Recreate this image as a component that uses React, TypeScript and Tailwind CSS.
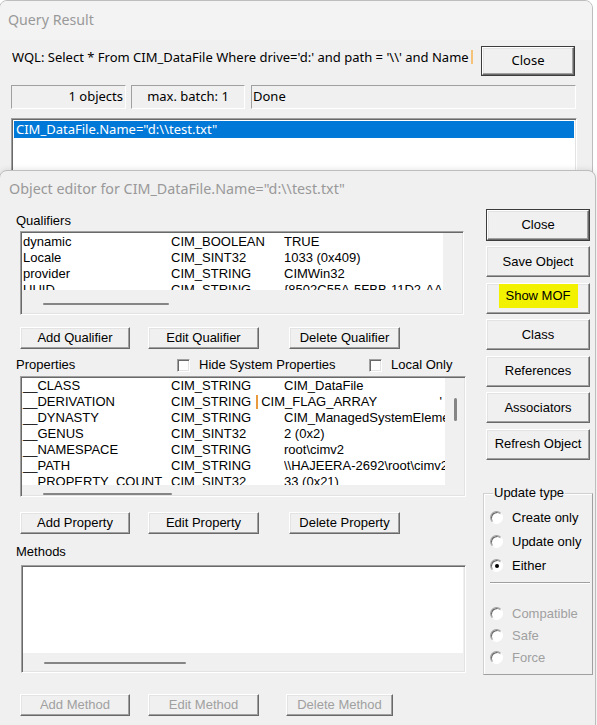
import React from 'react';

type BtnProps = {
  children: React.ReactNode;
  className?: string;
  disabled?: boolean;
};

// classic raised 3D push button
function Btn({ children, className = '', disabled = false }: BtnProps) {
  return (
    <div
      className={`flex items-center justify-center bg-[#f0f0f0] border border-t-white border-l-white border-r-[#696969] border-b-[#696969] shadow-[inset_-1px_-1px_0_#a0a0a0,inset_1px_1px_0_#e3e3e3] ${
        disabled ? 'text-[#a0a0a0]' : 'text-black'
      } ${className}`}
    >
      {children}
    </div>
  );
}

function DefBtn({ children, className = '' }: { children: React.ReactNode; className?: string }) {
  return (
    <div className={`border border-[#3c3c3c] ${className}`}>
      <Btn className="w-full h-full">{children}</Btn>
    </div>
  );
}

function Check() {
  return (
    <div className="w-[13px] h-[13px] bg-white border border-t-[#a0a0a0] border-l-[#a0a0a0] border-r-white border-b-white shadow-[inset_1px_1px_0_#696969,inset_-1px_-1px_0_#e3e3e3]" />
  );
}

function Radio({ on = false, label, disabled = false }: { on?: boolean; label: string; disabled?: boolean }) {
  return (
    <div className="flex items-center h-full">
      <div className="w-[13px] h-[13px] rounded-full bg-white border border-t-[#a0a0a0] border-l-[#a0a0a0] border-r-white border-b-white shadow-[inset_1px_1px_0_#696969] flex items-center justify-center">
        {on && <div className="w-[4px] h-[4px] rounded-full bg-black" />}
      </div>
      <span className={`ml-[9px] ${disabled ? 'text-[#a0a0a0]' : 'text-black'}`}>{label}</span>
    </div>
  );
}

const sunken =
  'relative bg-[#f0f0f0] border border-t-[#a0a0a0] border-l-[#a0a0a0] border-r-white border-b-white shadow-[inset_1px_1px_0_#696969,inset_-1px_-1px_0_#e3e3e3]';

const qualifiers = [
  ['dynamic', 'CIM_BOOLEAN', 'TRUE'],
  ['Locale', 'CIM_SINT32', '1033 (0x409)'],
  ['provider', 'CIM_STRING', 'CIMWin32'],
  ['UUID', 'CIM_STRING', '{8502C55A-5FBB-11D2-AAC1-006008C78BC7}'],
];

const properties = [
  ['__CLASS', 'CIM_STRING', 'CIM_DataFile'],
  ['__DERIVATION', 'CIM_STRING', ''],
  ['__DYNASTY', 'CIM_STRING', 'CIM_ManagedSystemElement'],
  ['__GENUS', 'CIM_SINT32', '2 (0x2)'],
  ['__NAMESPACE', 'CIM_STRING', 'root\\cimv2'],
  ['__PATH', 'CIM_STRING', '\\\\HAJEERA-2692\\root\\cimv2:CIM_DataFile.Name="d:\\\\test.txt"'],
  ['__PROPERTY_COUNT', 'CIM_SINT32', '33 (0x21)'],
];

function Row({ r }: { r: string[] }) {
  const deriv = r[0] === '__DERIVATION';
  return (
    <div className="flex h-[16px] leading-[16px] whitespace-nowrap">
      <div className="w-[149px] pl-[1px] shrink-0">{r[0]}</div>
      <div className="w-[113px] shrink-0 overflow-visible flex items-center">
        {r[1]}
        {deriv && (
          <>
            <span className="inline-block shrink-0 w-[2px] h-[14px] bg-[#e89a3c] ml-[5px] mr-[3px]" />
            <span>CIM_FLAG_ARRAY</span>
          </>
        )}
      </div>
      <div className={`flex-1 overflow-hidden ${deriv ? 'text-right pr-[3px]' : ''}`}>{deriv ? "'" : r[2]}</div>
    </div>
  );
}

export default function App() {
  return (
    <div className="relative w-[597px] h-[725px] overflow-hidden bg-white font-['Liberation_Sans',Arial,sans-serif] text-[13px] text-black">
      {/* Query Result window (behind) */}
      <div className="absolute left-[-1px] top-0 w-[594px] h-[300px] bg-[#f0f0f0] border border-[#bdbdbd] rounded-t-[8px] overflow-hidden">
        <div className="h-[39px] bg-[#f3f3f3] flex items-center pl-[8px] pb-[1px] text-[14.2px] text-[#999999] font-['Noto_Sans',sans-serif]">
          Query Result
        </div>
        <div className="flex items-start pt-[6px] pl-[12px] pr-[17px] font-['Noto_Sans',sans-serif] text-[13px]">
          <div className="mt-[2px] h-[18px] leading-[18px] w-[457px] overflow-hidden whitespace-nowrap">
            WQL: Select * From CIM_DataFile Where drive='d:' and path = '\\' and Name
          </div>
          <span className="mt-[4px] ml-[2px] w-[2px] h-[14px] bg-[#f5c27a]" />
          <DefBtn className="ml-auto w-[94px] h-[30px]">Close</DefBtn>
        </div>
        <div className="flex mt-[9px] ml-[11px] h-[24px] font-['Noto_Sans',sans-serif] text-[13px]">
          <div className="w-[115px] flex items-center justify-end pr-[2px] border border-t-[#a0a0a0] border-l-[#a0a0a0] border-r-white border-b-white">
            1 objects
          </div>
          <div className="ml-[5px] w-[114px] flex items-center justify-center border border-t-[#a0a0a0] border-l-[#a0a0a0] border-r-white border-b-white">
            max. batch: 1
          </div>
          <div className="ml-[6px] w-[325px] flex items-center pl-[1px] border border-t-[#a0a0a0] border-l-[#a0a0a0] border-r-white border-b-white">
            Done
          </div>
        </div>
        <div className={`${sunken} mt-[9px] ml-[11px] w-[566px] h-[120px] bg-white p-[2px] font-['Noto_Sans',sans-serif] text-[13px]`}>
          <div className="h-[17px] leading-[17px] bg-[#0078d7] text-white pl-[2px]">CIM_DataFile.Name="d:\\test.txt"</div>
        </div>
      </div>

      {/* Object editor window (front) */}
      <div className="absolute left-[-1px] top-[170px] w-[597px] h-[580px] bg-[#f0f0f0] border border-[#bdbdbd] rounded-t-[8px] shadow-[0_0_6px_rgba(0,0,0,0.12)]">
        <div className="h-[35px] flex items-center pl-[9px] text-[14.3px] text-[#999999] font-['Noto_Sans',sans-serif]">
          Object editor for CIM_DataFile.Name="d:\\test.txt"
        </div>
        <div className="flex">
          {/* left column */}
          <div className="w-[483px] pl-[16px] flex flex-col">
            <div className="mt-[7px] h-[16px] leading-[16px]">Qualifiers</div>
            <div className={`${sunken} mt-[2px] ml-[4px] w-[444px] h-[84px]`}>
              <div className="ml-[1px] mt-[1px] w-[421px] h-[57px] bg-white overflow-hidden pt-[1px]">
                {qualifiers.map((r) => (
                  <Row key={r[0]} r={r} />
                ))}
              </div>
              <div className="absolute left-[22px] top-[71px] w-[126px] h-[2px] rounded-full bg-[#858585]" />
            </div>
            <div className="flex mt-[12px] ml-[4px] h-[22px]">
              <Btn className="w-[110px]">Add Qualifier</Btn>
              <Btn className="ml-[18px] w-[111px]">Edit Qualifier</Btn>
              <Btn className="ml-[30px] w-[111px]">Delete Qualifier</Btn>
            </div>
            <div className="flex items-center mt-[8px] h-[16px]">
              <div className="w-[161px]">Properties</div>
              <Check />
              <div className="w-[179px] pl-[9px]">Hide System Properties</div>
              <Check />
              <div className="pl-[9px]">Local Only</div>
            </div>
            <div className={`${sunken} mt-[3px] ml-[4px] w-[446px] h-[121px]`}>
              <div className="ml-[1px] mt-[1px] w-[423px] h-[107px] bg-white overflow-hidden">
                {properties.map((r) => (
                  <Row key={r[0]} r={r} />
                ))}
              </div>
              <div className="absolute left-[22px] top-[116px] w-[129px] h-[2px] rounded-full bg-[#858585]" />
              <div className="absolute left-[433px] top-[21px] w-[3px] h-[23px] rounded-full bg-[#858585]" />
            </div>
            <div className="flex mt-[15px] ml-[4px] h-[22px]">
              <Btn className="w-[110px]">Add Property</Btn>
              <Btn className="ml-[18px] w-[111px]">Edit Property</Btn>
              <Btn className="ml-[30px] w-[111px]">Delete Property</Btn>
            </div>
            <div className="mt-[10px] h-[16px] leading-[16px]">Methods</div>
            <div className={`${sunken} mt-[5px] ml-[5px] w-[445px] h-[108px]`}>
              <div className="ml-[1px] mt-[1px] w-[440px] h-[86px] bg-white" />
              <div className="absolute left-[22px] top-[96px] w-[142px] h-[2px] rounded-full bg-[#858585]" />
            </div>
            <div className="flex mt-[21px] ml-[4px] h-[22px]">
              <Btn className="w-[110px]" disabled>
                Add Method
              </Btn>
              <Btn className="ml-[18px] w-[111px]" disabled>
                Edit Method
              </Btn>
              <Btn className="ml-[27px] w-[107px]" disabled>
                Delete Method
              </Btn>
            </div>
          </div>

          {/* right column */}
          <div className="w-[110px] flex flex-col pt-[3px]">
            <DefBtn className="ml-[3px] w-[104px] h-[32px]">Close</DefBtn>
            <div className="ml-[3px] w-[104px] flex flex-col gap-[5.5px] mt-[5px]">
              <Btn className="h-[31px]">Save Object</Btn>
              <Btn className="h-[31px]">
                <span className="w-[79px] h-[24px] mb-[4px] bg-[#f2f200] flex items-center justify-center">Show MOF</span>
              </Btn>
              <Btn className="h-[31px]">Class</Btn>
              <Btn className="h-[31px]">References</Btn>
              <Btn className="h-[31px]">Associators</Btn>
              <Btn className="h-[31px]">Refresh Object</Btn>
            </div>
            <div className="relative mt-[33px] h-[182px] border border-t-[#d0d0d0] border-l-[#d0d0d0] border-r-[#a0a0a0] border-b-[#a0a0a0] shadow-[inset_1px_1px_0_white]">
              <div className="absolute left-[9px] top-[-9px] bg-[#f0f0f0] px-[1px] leading-[16px]">Update type</div>
              <div className="pl-[6px] pt-[12px] flex flex-col">
                <div className="h-[24px]">
                  <Radio label="Create only" />
                </div>
                <div className="h-[24px]">
                  <Radio label="Update only" />
                </div>
                <div className="h-[24px]">
                  <Radio on label="Either" />
                </div>
                <div className="mt-[4px] mr-[2px] h-[2px] border-t border-t-[#a0a0a0] border-b border-b-white" />
                <div className="mt-[19px] h-[22px]">
                  <Radio disabled label="Compatible" />
                </div>
                <div className="h-[22px]">
                  <Radio disabled label="Safe" />
                </div>
                <div className="h-[22px]">
                  <Radio disabled label="Force" />
                </div>
              </div>
            </div>
          </div>
        </div>
      </div>
    </div>
  );
}
